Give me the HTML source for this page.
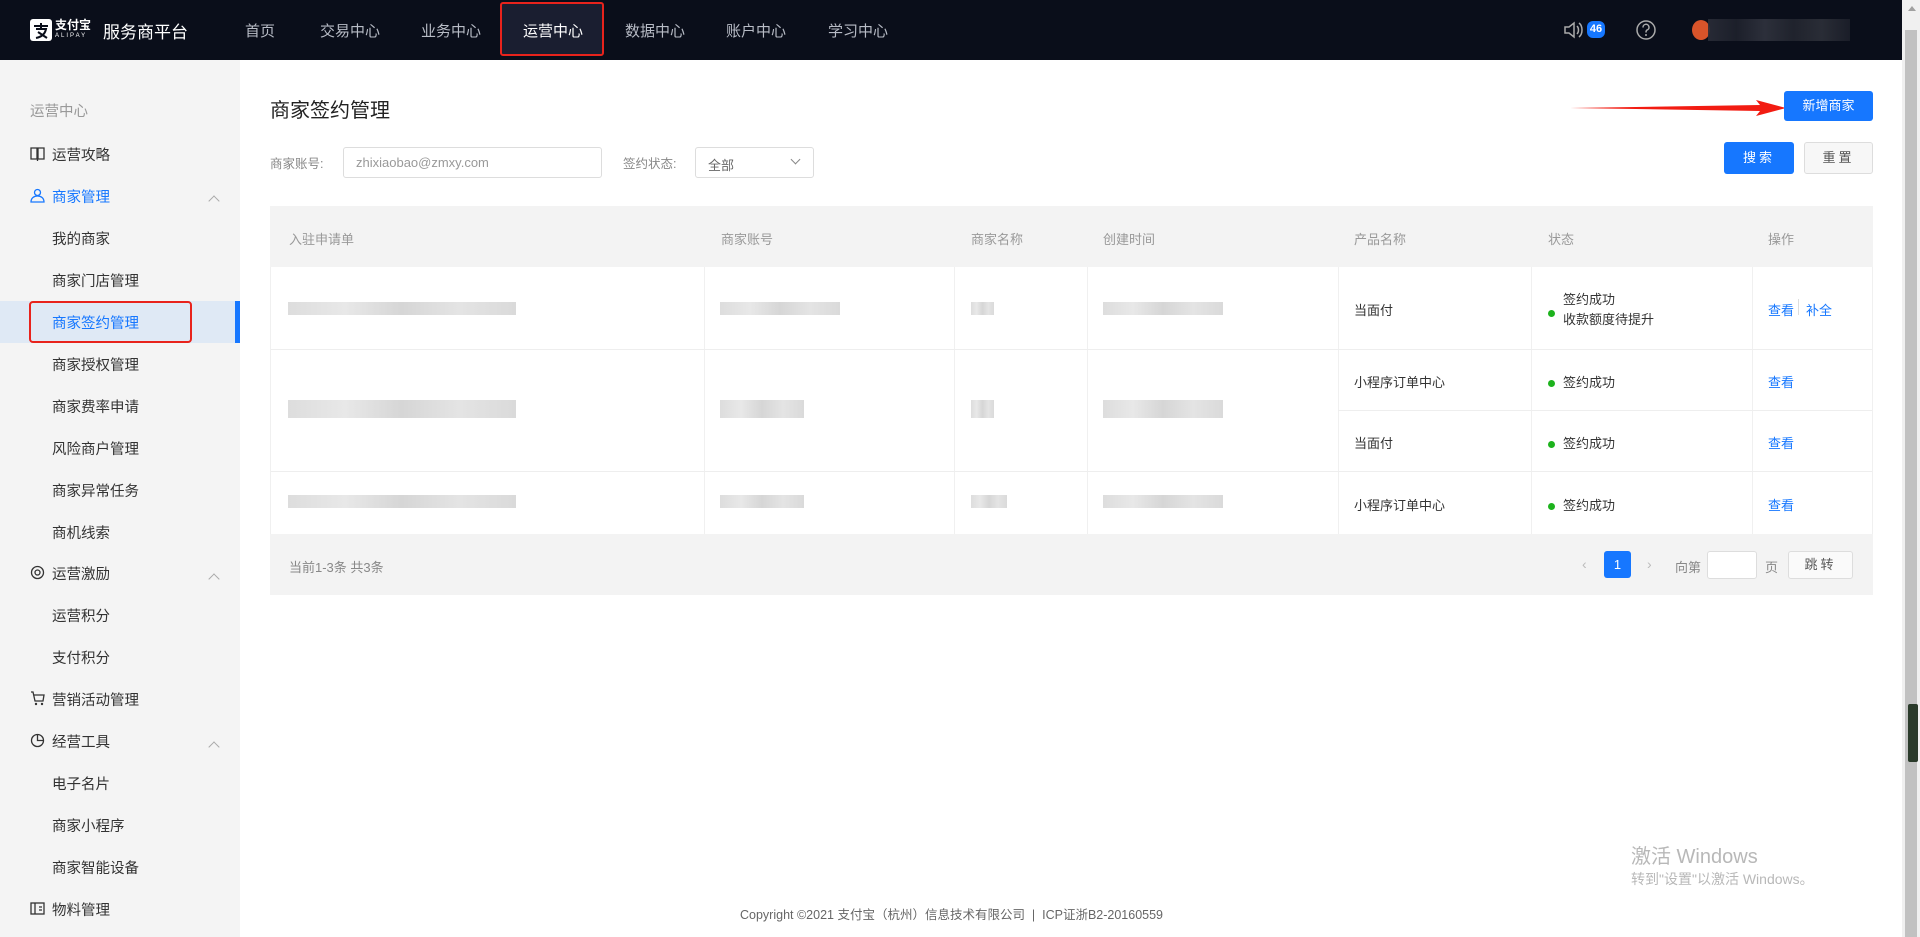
<!DOCTYPE html>
<html><head><meta charset="utf-8"><style>
*{margin:0;padding:0;box-sizing:border-box}
body{width:1920px;height:937px;overflow:hidden;background:#fff;font-family:"Liberation Sans","Noto Sans CJK SC",sans-serif;position:relative;color:#333}
.a{position:absolute;white-space:nowrap}
.hdr{position:absolute;left:0;top:0;width:1902px;height:60px;background:#0a0e1a}
.nav{position:absolute;top:20px;font-size:15px;color:#b8bcc6}
.side{position:absolute;left:0;top:60px;width:240px;height:877px;background:#f4f4f4}
.si{position:absolute;left:52px;font-size:14.5px;color:#333}
.ic{position:absolute;left:30px;width:15px;height:15px}
.chev{position:absolute;left:210px;width:8px;height:8px;border-left:1px solid #aaa;border-top:1px solid #aaa;transform:rotate(45deg)}
.th{position:absolute;top:229px;font-size:13px;color:#999}
.bl{position:absolute;background:linear-gradient(90deg,#ddd,#e8e8e8,#d6d6d6,#e4e4e4,#dadada);height:13px}
.td{position:absolute;font-size:13px;color:#333}
.vl{position:absolute;width:1px;background:#f0f0f0}
.hl{position:absolute;height:1px;background:#eee}
.dot{display:inline-block;width:7px;height:7px;border-radius:50%;background:#1db31d;margin-right:8px;vertical-align:middle}
.lk{position:absolute;font-size:13px;color:#1677ff}
.btn{position:absolute;border-radius:3px;font-size:13px;text-align:center}
</style></head><body>
<div class="hdr"></div>
<svg class="a" style="left:30px;top:19px" width="22" height="22" viewBox="0 0 22 22"><rect width="22" height="22" rx="3" fill="#fff"/><path d="M4 7h14M11 4v6M6 10h10c-1 5-5 8-10 9M8 13c3 2 6 4 9 6" stroke="#0a0e1a" stroke-width="2" fill="none"/></svg>
<div class="a" style="left:55px;top:19px;color:#fff;font-size:12px;font-weight:bold;line-height:12px">支付宝</div>
<div class="a" style="left:55px;top:33px;color:#fff;font-size:6px;letter-spacing:2px">ALIPAY</div>
<div class="a" style="left:103px;top:18px;color:#fff;font-size:17px">服务商平台</div>
<div class="nav" style="left:245px">首页</div>
<div class="nav" style="left:320px">交易中心</div>
<div class="nav" style="left:421px">业务中心</div>
<div class="a" style="left:500px;top:2px;width:104px;height:54px;background:#1a1e30;border:2px solid #e8231c;border-radius:3px"></div>
<div class="nav" style="left:523px;color:#fff">运营中心</div>
<div class="nav" style="left:625px">数据中心</div>
<div class="nav" style="left:726px">账户中心</div>
<div class="nav" style="left:828px">学习中心</div>
<svg class="a" style="left:1563px;top:20px" width="22" height="20" viewBox="0 0 22 20"><path d="M2 7h4l5-4v14l-5-4H2z" stroke="#aaa" stroke-width="1.5" fill="none"/><path d="M14 6c2 2 2 6 0 8M16 3c4 3 4 11 0 14" stroke="#aaa" stroke-width="1.5" fill="none"/></svg>
<div class="a" style="left:1587px;top:21px;width:18px;height:17px;background:#1677ff;border-radius:6px;color:#fff;font-size:11px;font-weight:bold;text-align:center;line-height:17px">46</div>
<svg class="a" style="left:1635px;top:19px" width="22" height="22" viewBox="0 0 22 22"><circle cx="11" cy="11" r="9" stroke="#aaa" stroke-width="1.5" fill="none"/><path d="M8 8.5a3 3 0 1 1 4 2.6c-1 .4-1 1-1 2.4" stroke="#aaa" stroke-width="1.5" fill="none"/><circle cx="11" cy="16" r="1" fill="#aaa"/></svg>
<div class="a" style="left:1692px;top:20px;width:18px;height:20px;border-radius:50%;background:#d9542a"></div>
<div class="a" style="left:1708px;top:19px;width:142px;height:22px;background:linear-gradient(90deg,#2a2d38,#1e212c,#30333e,#22252f,#2d3039,#1c1f2a);opacity:.9"></div>
<div class="a" style="left:1902px;top:0;width:18px;height:937px;background:#f0f0f0"></div>
<div class="a" style="left:1905px;top:30px;width:12px;height:907px;background:#c1c1c1"></div>
<div class="a" style="left:1908px;top:6px;width:0;height:0;border-left:4px solid transparent;border-right:4px solid transparent;border-bottom:5px solid #a0a0a0"></div>
<div class="a" style="left:1908px;top:704px;width:10px;height:58px;background:#2a3a2a;border-radius:2px"></div>

<div class="side"></div>
<div class="si" style="left:30px;top:100px;color:#999">运营中心</div>
<svg class="ic" style="top:146px" viewBox="0 0 15 15"><path d="M1 2h6v11H1zM8 2h6v11H8zM7.5 13v2" stroke="#333" stroke-width="1.3" fill="none"/></svg>
<div class="si" style="top:144px">运营攻略</div>
<svg class="ic" style="top:188px" viewBox="0 0 15 15"><circle cx="7.5" cy="4.5" r="3" stroke="#1677ff" stroke-width="1.3" fill="none"/><path d="M1 14c0-4 3-6 6.5-6s6.5 2 6.5 6z" stroke="#1677ff" stroke-width="1.3" fill="none"/></svg>
<div class="si" style="top:186px;color:#1677ff">商家管理</div>
<div class="chev" style="top:197px"></div>
<div class="si" style="top:228px">我的商家</div>
<div class="si" style="top:270px">商家门店管理</div>
<div class="a" style="left:0;top:301px;width:240px;height:42px;background:#dfe9f5"></div>
<div class="a" style="left:235px;top:301px;width:5px;height:42px;background:#1677ff"></div>
<div class="a" style="left:29px;top:301px;width:163px;height:42px;border:2px solid #e8231c;border-radius:4px"></div>
<div class="si" style="top:312px;color:#1677ff">商家签约管理</div>
<div class="si" style="top:354px">商家授权管理</div>
<div class="si" style="top:396px">商家费率申请</div>
<div class="si" style="top:438px">风险商户管理</div>
<div class="si" style="top:480px">商家异常任务</div>
<div class="si" style="top:522px">商机线索</div>
<svg class="ic" style="top:565px" viewBox="0 0 15 15"><circle cx="7.5" cy="7.5" r="6" stroke="#333" stroke-width="1.3" fill="none"/><circle cx="7.5" cy="7.5" r="2.5" stroke="#333" stroke-width="1.3" fill="none"/></svg>
<div class="si" style="top:563px">运营激励</div>
<div class="chev" style="top:575px"></div>
<div class="si" style="top:605px">运营积分</div>
<div class="si" style="top:647px">支付积分</div>
<svg class="ic" style="top:691px" viewBox="0 0 15 15"><path d="M1 1h2l2 9h8l1-6H4" stroke="#333" stroke-width="1.3" fill="none"/><circle cx="6" cy="13" r="1.2" fill="#333"/><circle cx="12" cy="13" r="1.2" fill="#333"/></svg>
<div class="si" style="top:689px">营销活动管理</div>
<svg class="ic" style="top:733px" viewBox="0 0 15 15"><circle cx="7.5" cy="7.5" r="6" stroke="#333" stroke-width="1.3" fill="none"/><path d="M7.5 1.5v6h6" stroke="#333" stroke-width="1.3" fill="none"/></svg>
<div class="si" style="top:731px">经营工具</div>
<div class="chev" style="top:743px"></div>
<div class="si" style="top:773px">电子名片</div>
<div class="si" style="top:815px">商家小程序</div>
<div class="si" style="top:857px">商家智能设备</div>
<svg class="ic" style="top:901px" viewBox="0 0 15 15"><rect x="1" y="2" width="13" height="11" stroke="#333" stroke-width="1.3" fill="none"/><path d="M5 2v11M9 6h3M9 9h3" stroke="#333" stroke-width="1.3"/></svg>
<div class="si" style="top:899px">物料管理</div>

<div class="a" style="left:270px;top:94px;font-size:20px;color:#222">商家签约管理</div>
<div class="a" style="left:270px;top:153px;font-size:12.5px;color:#888">商家账号:</div>
<div class="a" style="left:343px;top:147px;width:259px;height:31px;border:1px solid #ddd;border-radius:3px;font-size:13px;color:#999;padding:7px 12px">zhixiaobao@zmxy.com</div>
<div class="a" style="left:623px;top:153px;font-size:12.5px;color:#888">签约状态:</div>
<div class="a" style="left:695px;top:147px;width:119px;height:31px;border:1px solid #ddd;border-radius:3px;font-size:13px;color:#666;padding:7px 12px">全部</div>
<div class="a" style="left:792px;top:156px;width:7px;height:7px;border-right:1px solid #888;border-bottom:1px solid #888;transform:rotate(45deg)"></div>
<svg class="a" style="left:1570px;top:100px" width="216" height="16" viewBox="0 0 216 16"><path d="M0 8 L190 5 L186 0 L216 8 L186 16 L190 11 Z" fill="#f21c12"/></svg>
<div class="btn" style="left:1784px;top:91px;width:89px;height:30px;background:#1677ff;color:#fff;line-height:30px">新增商家</div>
<div class="btn" style="left:1724px;top:142px;width:70px;height:32px;background:#1677ff;color:#fff;line-height:32px;letter-spacing:3px">搜索</div>
<div class="btn" style="left:1804px;top:142px;width:69px;height:32px;background:#f7f7f7;border:1px solid #ddd;color:#555;line-height:30px;letter-spacing:3px">重置</div>

<div class="a" style="left:270px;top:206px;width:1603px;height:61px;background:#f3f3f3"></div>
<div class="th" style="left:289px">入驻申请单</div>
<div class="th" style="left:721px">商家账号</div>
<div class="th" style="left:971px">商家名称</div>
<div class="th" style="left:1103px">创建时间</div>
<div class="th" style="left:1354px">产品名称</div>
<div class="th" style="left:1548px">状态</div>
<div class="th" style="left:1768px">操作</div>
<div class="vl" style="left:704px;top:267px;height:267px"></div>
<div class="vl" style="left:954px;top:267px;height:267px"></div>
<div class="vl" style="left:1087px;top:267px;height:267px"></div>
<div class="vl" style="left:1338px;top:267px;height:267px"></div>
<div class="vl" style="left:1531px;top:267px;height:267px"></div>
<div class="vl" style="left:1752px;top:267px;height:267px"></div>
<div class="hl" style="left:270px;top:349px;width:1603px"></div>
<div class="hl" style="left:1338px;top:410px;width:535px"></div>
<div class="hl" style="left:270px;top:471px;width:1603px"></div>
<div class="vl" style="left:270px;top:267px;height:267px"></div>
<div class="vl" style="left:1872px;top:267px;height:267px"></div>

<div class="bl" style="left:288px;top:302px;width:228px"></div>
<div class="bl" style="left:720px;top:302px;width:120px"></div>
<div class="bl" style="left:971px;top:302px;width:23px"></div>
<div class="bl" style="left:1103px;top:302px;width:120px"></div>
<div class="bl" style="left:288px;top:400px;width:228px;height:18px"></div>
<div class="bl" style="left:720px;top:400px;width:84px;height:18px"></div>
<div class="bl" style="left:971px;top:400px;width:23px;height:18px"></div>
<div class="bl" style="left:1103px;top:400px;width:120px;height:18px"></div>
<div class="bl" style="left:288px;top:495px;width:228px"></div>
<div class="bl" style="left:720px;top:495px;width:84px"></div>
<div class="bl" style="left:971px;top:495px;width:36px"></div>
<div class="bl" style="left:1103px;top:495px;width:120px"></div>

<div class="td" style="left:1354px;top:300px">当面付</div>
<div class="td" style="left:1548px;top:290px;padding-left:15px;line-height:20px">签约成功<br>收款额度待提升</div>
<div class="a" style="left:1548px;top:305px"><span class="dot"></span></div>
<div class="lk" style="left:1768px;top:300px">查看</div>
<div class="a" style="left:1798px;top:299px;width:1px;height:16px;background:#ddd"></div>
<div class="lk" style="left:1806px;top:300px">补全</div>

<div class="td" style="left:1354px;top:372px">小程序订单中心</div>
<div class="td" style="left:1548px;top:372px"><span class="dot"></span>签约成功</div>
<div class="lk" style="left:1768px;top:372px">查看</div>
<div class="td" style="left:1354px;top:433px">当面付</div>
<div class="td" style="left:1548px;top:433px"><span class="dot"></span>签约成功</div>
<div class="lk" style="left:1768px;top:433px">查看</div>
<div class="td" style="left:1354px;top:495px">小程序订单中心</div>
<div class="td" style="left:1548px;top:495px"><span class="dot"></span>签约成功</div>
<div class="lk" style="left:1768px;top:495px">查看</div>

<div class="a" style="left:270px;top:534px;width:1603px;height:61px;background:#f3f3f3"></div>
<div class="a" style="left:289px;top:557px;font-size:13px;color:#888">当前1-3条 共3条</div>
<div class="a" style="left:1582px;top:556px;font-size:14px;color:#bbb">‹</div>
<div class="btn" style="left:1604px;top:551px;width:27px;height:27px;background:#1677ff;color:#fff;line-height:27px">1</div>
<div class="a" style="left:1647px;top:556px;font-size:14px;color:#bbb">›</div>
<div class="a" style="left:1675px;top:557px;font-size:13px;color:#888">向第</div>
<div class="a" style="left:1707px;top:551px;width:50px;height:28px;background:#fff;border:1px solid #ddd;border-radius:3px"></div>
<div class="a" style="left:1765px;top:557px;font-size:13px;color:#888">页</div>
<div class="btn" style="left:1788px;top:551px;width:65px;height:28px;background:#fafafa;border:1px solid #ddd;color:#555;line-height:26px;letter-spacing:3px">跳转</div>

<div class="a" style="left:740px;top:904px;font-size:12.5px;color:#666">Copyright ©2021 支付宝（杭州）信息技术有限公司 &nbsp;|&nbsp; ICP证浙B2-20160559</div>
<div class="a" style="left:1631px;top:840px;font-size:20px;color:#b8b8b8">激活 Windows</div>
<div class="a" style="left:1631px;top:869px;font-size:14px;color:#b8b8b8">转到"设置"以激活 Windows。</div>
</body></html>
